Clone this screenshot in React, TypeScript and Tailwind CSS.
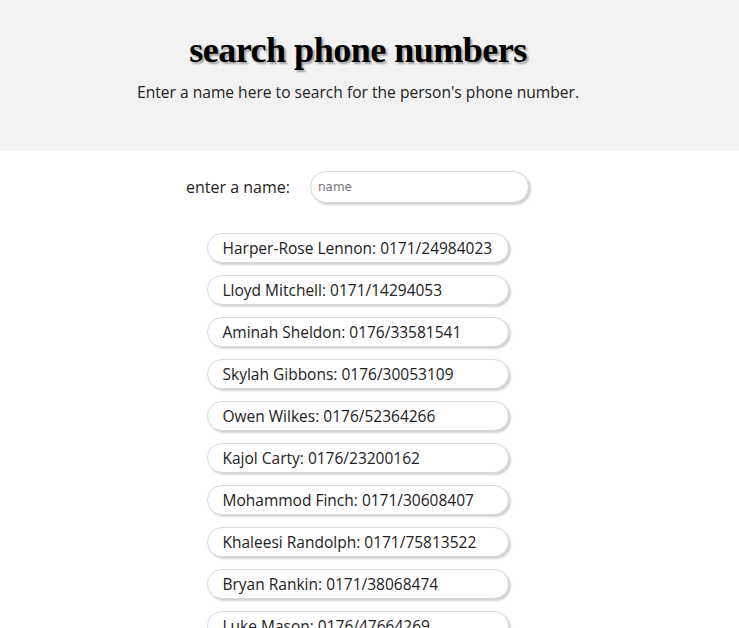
import React, { useState } from 'react';

const people = [
  { name: 'Harper-Rose Lennon', phone: '0171/24984023' },
  { name: 'Lloyd Mitchell', phone: '0171/14294053' },
  { name: 'Aminah Sheldon', phone: '0176/33581541' },
  { name: 'Skylah Gibbons', phone: '0176/30053109' },
  { name: 'Owen Wilkes', phone: '0176/52364266' },
  { name: 'Kajol Carty', phone: '0176/23200162' },
  { name: 'Mohammod Finch', phone: '0171/30608407' },
  { name: 'Khaleesi Randolph', phone: '0171/75813522' },
  { name: 'Bryan Rankin', phone: '0171/38068474' },
  { name: 'Luke Mason', phone: '0176/47664269' },
];

export default function App(): React.ReactElement {
  const [query, setQuery] = useState('');
  const shown = people.filter((p) => p.name.toLowerCase().includes(query.toLowerCase()));

  return (
    <div className="h-[628px] overflow-hidden bg-white font-['Open_Sans',sans-serif] text-[#1a1a1a]">
      <header className="h-[151px] bg-[#f2f2f2] pr-[23px] pt-[28px] text-center">
        <h1 className="font-['Liberation_Serif',serif] text-[36px] font-bold leading-[44px] tracking-[-0.5px] text-black [text-shadow:2px_2px_2px_rgba(0,0,0,0.35)]">
          search phone numbers
        </h1>
        <p className="mt-[8px] text-[15.6px] leading-[24px] text-[#222]">
          Enter a name here to search for the person's phone number.
        </p>
      </header>

      <main className="flex flex-col items-center pr-[24px]">
        <div className="mt-[20px] flex items-center gap-[20px]">
          <label htmlFor="name" className="text-[16px] text-[#222]">
            enter a name:
          </label>
          <input
            id="name"
            value={query}
            onChange={(e) => setQuery(e.target.value)}
            placeholder="name"
            className="h-[32px] w-[219px] rounded-full border border-[#d6d6d6] bg-white px-[7px] font-['DejaVu_Sans',sans-serif] text-[12px] shadow-[2px_2px_2px_rgba(0,0,0,0.18)] outline-none placeholder:text-[#777]"
          />
        </div>

        <ul className="mt-[30px] flex flex-col gap-[12px]">
          {shown.map((p) => (
            <li
              key={p.name}
              className="h-[30px] w-[302px] rounded-full border border-[#d9d9d9] bg-white pl-[15px] text-[15.5px] leading-[28px] text-[#222] shadow-[2px_2px_2px_rgba(0,0,0,0.18)]"
            >
              {p.name}: {p.phone}
            </li>
          ))}
        </ul>
      </main>
    </div>
  );
}
